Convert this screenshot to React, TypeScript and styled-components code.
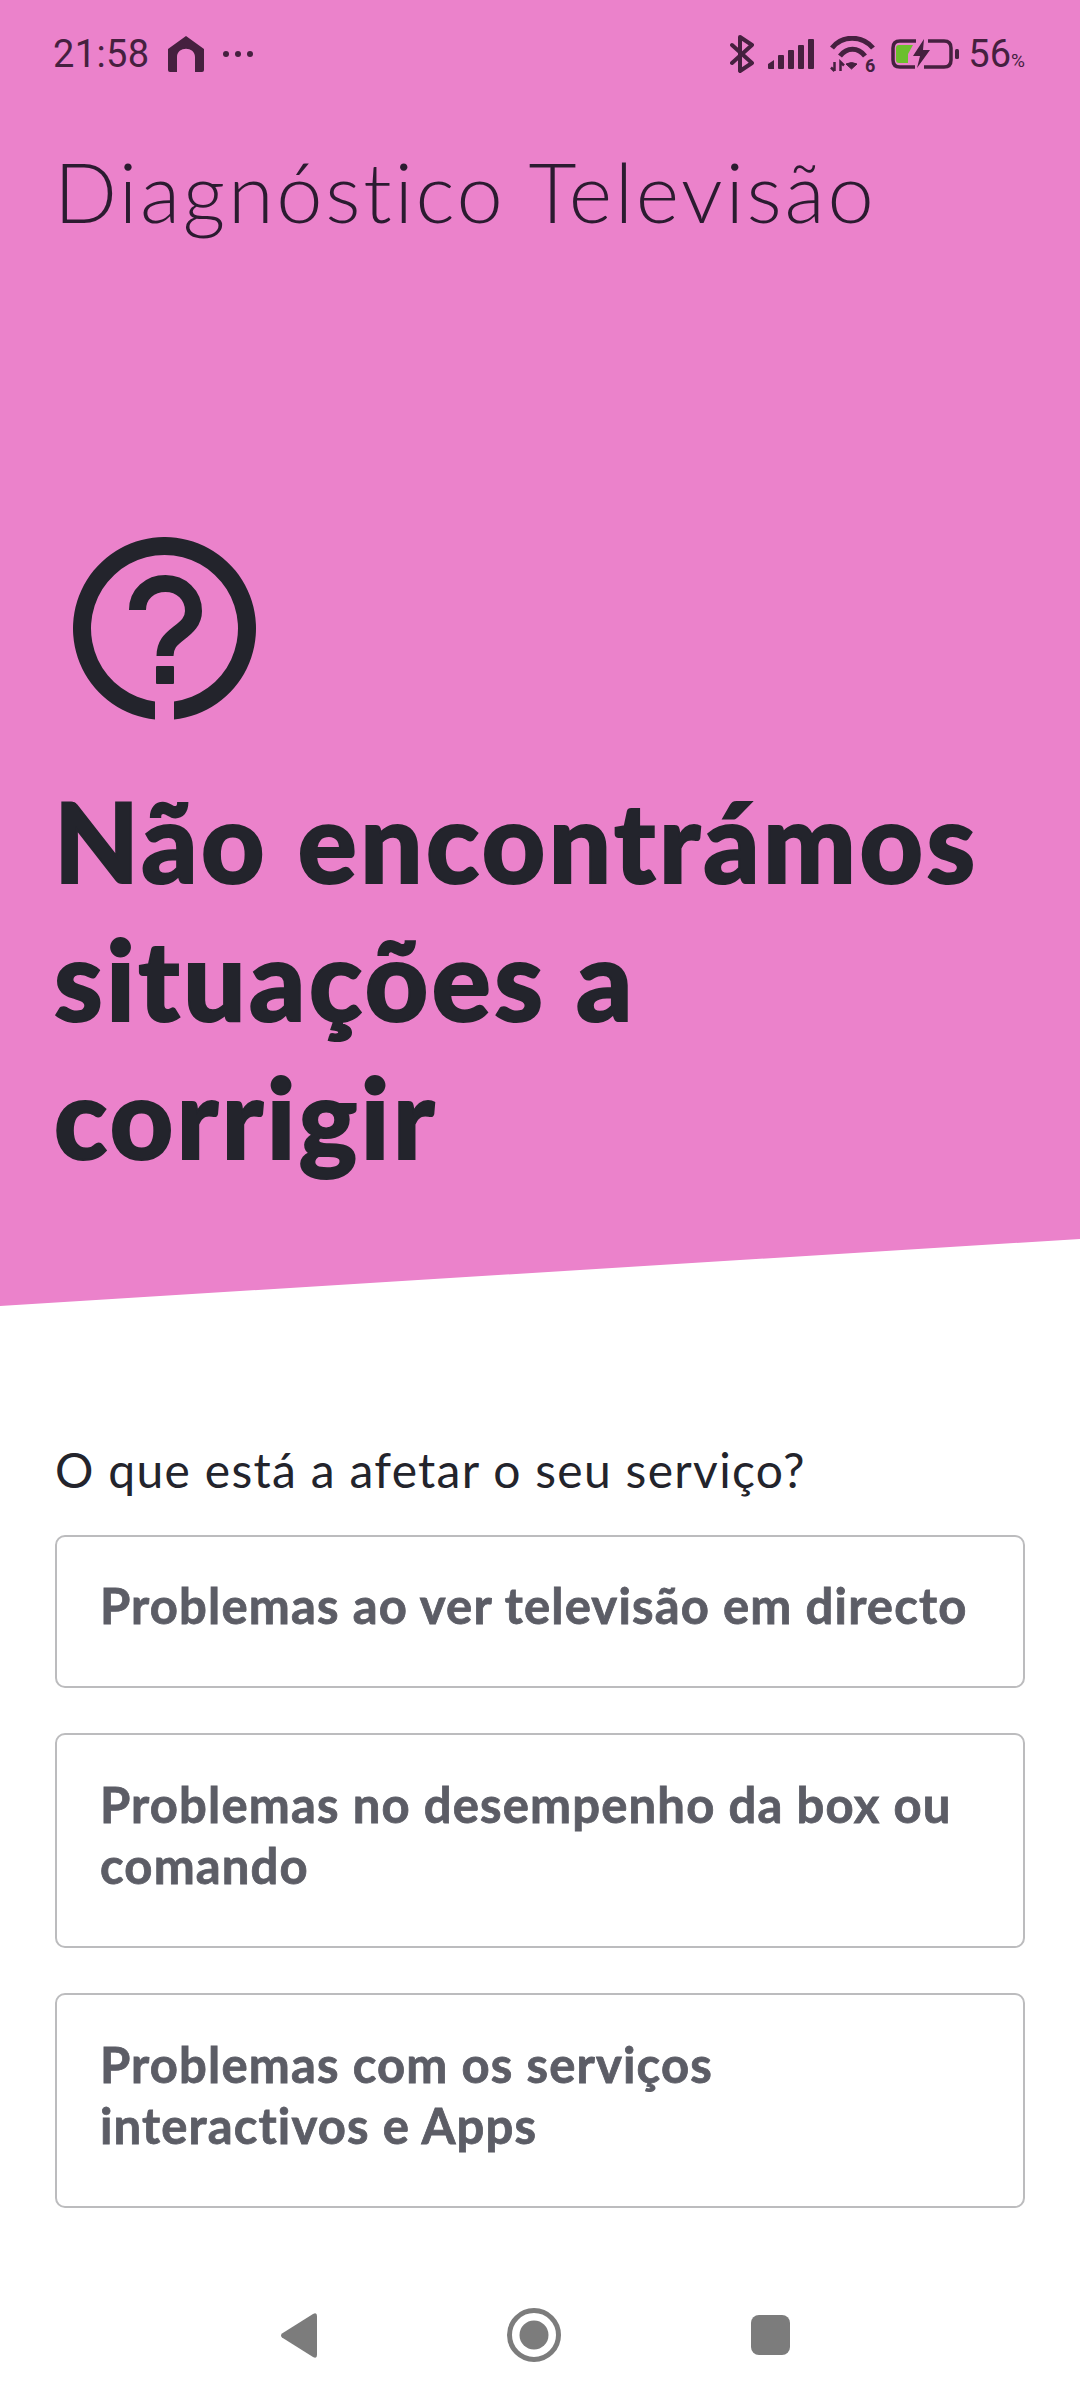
import React from 'react'
import styled, { createGlobalStyle } from 'styled-components'

const GlobalStyle = createGlobalStyle`
  html, body {
    margin: 0;
    padding: 0;
    background: #fff;
  }
  * {
    box-sizing: border-box;
  }
`

const Page = styled.div`
  width: 1080px;
  height: 2400px;
  display: flex;
  flex-direction: column;
  background: #fff;
  font-family: Lato, "Noto Sans", sans-serif;
  overflow: hidden;
`

const Hero = styled.section`
  height: 1306px;
  flex-shrink: 0;
  background: #eb82cb;
  clip-path: polygon(0 0, 100% 0, 100% 1239px, 0 100%);
  padding: 0 55px;
`

const StatusBar = styled.div`
  height: 108px;
  display: flex;
  align-items: center;
  justify-content: space-between;
  color: #45203f;
  font-family: Roboto, sans-serif;
`

const StatusSide = styled.div`
  display: flex;
  align-items: center;
`

const Time = styled.span`
  font-size: 38px;
  letter-spacing: 0.4px;
  margin: 0 18px 0 -2px;
`

const StatusIcon = styled.svg<{ $gap?: number }>`
  display: block;
  flex-shrink: 0;
  margin-right: ${({ $gap }) => $gap ?? 0}px;
`

const WifiIcon = styled.div`
  position: relative;
  width: 46px;
  height: 37px;
  margin-right: 16px;
  flex-shrink: 0;
`

const WifiBadge = styled.span`
  position: absolute;
  right: 0;
  bottom: 0;
  font-size: 18px;
  line-height: 14px;
  font-weight: 700;
`

const Percent = styled.span`
  font-size: 38px;
  small {
    font-size: 19px;
  }
`

const Title = styled.h1`
  margin: 33px 0 0 -1px;
  font-size: 83px;
  line-height: 100px;
  letter-spacing: 2.7px;
  font-weight: 300;
  color: #2b1b30;
  white-space: nowrap;
`

const HelpIcon = styled.svg`
  display: block;
  width: 184px;
  height: 184px;
  margin: 296px 0 0 18px;
`

const Heading = styled.h2`
  margin: 50px 0 0 -1px;
  font-size: 110px;
  line-height: 138px;
  letter-spacing: 3.5px;
  font-weight: 900;
  color: #23242c;
  -webkit-text-stroke: 2px #23242c;
  white-space: nowrap;
`

const Content = styled.section`
  flex: 1;
  padding: 0 55px;
  display: flex;
  flex-direction: column;
`

const Question = styled.p`
  margin: 134px 0 0;
  height: 60px;
  font-size: 48px;
  line-height: 60px;
  letter-spacing: 1.3px;
  color: #23242c;
  white-space: nowrap;
`

const Options = styled.div`
  margin-top: 35px;
  display: flex;
  flex-direction: column;
  gap: 45px;
`

const Option = styled.div<{ $tall?: boolean }>`
  height: ${({ $tall }) => ($tall ? '215px' : '153px')};
  border: 2px solid #bcbcbe;
  border-radius: 10px;
  padding: ${({ $tall }) => ($tall ? '39px' : '38px')} 43px 0;
  font-size: 49px;
  line-height: 61px;
  letter-spacing: 1.15px;
  font-weight: 700;
  color: #5c5d66;
  -webkit-text-stroke: 0.8px #5c5d66;
  white-space: nowrap;
`

const NavBar = styled.nav`
  height: 130px;
  flex-shrink: 0;
  display: flex;
  align-items: center;
  gap: 190px;
  padding-left: 281px;
`

const Bluetooth = () => (
  <StatusIcon $gap={14} width="24" height="38" viewBox="0 0 24 38" fill="none" stroke="#45203f" strokeWidth="4" strokeLinecap="round" strokeLinejoin="round">
    <path d="M2 10 L22 28 L10 36 V2 L22 10 L2 28" />
  </StatusIcon>
)

const Signal = () => (
  <StatusIcon $gap={13} width="48" height="31" viewBox="0 0 48 31" fill="#45203f">
    <path d="M0 25 L6 21 V30 H1 Q0 30 0 29 Z" />
    <rect x="10" y="16" width="6" height="14" rx="1" />
    <rect x="20" y="11" width="6" height="19" rx="1" />
    <rect x="30" y="6" width="6" height="24" rx="1" />
    <rect x="40" y="0" width="6" height="30" rx="1" />
  </StatusIcon>
)

const Wifi = () => (
  <WifiIcon>
    <StatusIcon width="46" height="37" viewBox="0 0 46 37" fill="none" stroke="#45203f">
      <path d="M3 12 C13 -1 33 -1 44 12" strokeWidth="5" />
      <path d="M11 20 C18 11 29 11 36 20" strokeWidth="5" />
      <path d="M17 28 Q22.5 25 28 28 L22.5 33 Z" fill="#45203f" strokeWidth="1" />
      <path d="M5.5 26 V35 M2 31.5 L5.5 35 M11.5 35 V26 L15 29.5" strokeWidth="2.5" />
    </StatusIcon>
    <WifiBadge>6</WifiBadge>
  </WifiIcon>
)

const Battery = () => (
  <StatusIcon $gap={9} width="68" height="31" viewBox="0 0 68 31" fill="none">
    <path d="M25 2 H9 Q2 2 2 9 V21 Q2 28 9 28 H24" stroke="#45203f" strokeWidth="3.5" />
    <path d="M37 2 H53 Q60 2 60 9 V21 Q60 28 53 28 H33" stroke="#45203f" strokeWidth="3.5" />
    <path d="M5 9 Q5 6 8 6 H22 L17 15 V24 H8 Q5 24 5 21 Z" fill="#6cbf2c" />
    <path d="M33 0 L22 17 H29 L26 29 L39 11 H32 Z" fill="#45203f" />
    <rect x="64" y="10" width="4" height="10" rx="1.5" fill="#45203f" />
  </StatusIcon>
)

const App = () => {
  return (
    <Page>
      <GlobalStyle />
      <Hero>
        <StatusBar>
          <StatusSide>
            <Time>21:58</Time>
            <StatusIcon $gap={18} width="36" height="36" viewBox="0 0 36 36" fill="#45203f">
              <path d="M18 0 L36 13 V34 Q36 36 34 36 H27 V21 C27 10 9 10 9 21 V36 H2 Q0 36 0 34 V13 Z" />
            </StatusIcon>
            <StatusIcon width="32" height="8" viewBox="0 0 32 8" fill="#45203f">
              <circle cx="4" cy="4" r="3" />
              <circle cx="16" cy="4" r="3" />
              <circle cx="28" cy="4" r="3" />
            </StatusIcon>
          </StatusSide>
          <StatusSide>
            <Bluetooth />
            <Signal />
            <Wifi />
            <Battery />
            <Percent>56<small>%</small></Percent>
          </StatusSide>
        </StatusBar>
        <Title>Diagnóstico Televisão</Title>
        <HelpIcon viewBox="0 0 184 184" fill="none">
          <path d="M82 182.5 A91.5 91.5 0 1 1 101 182.5 L101 164.4 A73.5 73.5 0 1 0 82 164.4 Z" fill="#23242c" />
          <path d="M64.5 73 C64.5 57 77 46.5 92.5 46.5 C108 46.5 120.5 58 120.5 74 C120.5 84 114 90 106 96 C97 103 92 108 92 119" stroke="#23242c" strokeWidth="17" />
          <rect x="83" y="129" width="18" height="18" rx="1" fill="#23242c" />
        </HelpIcon>
        <Heading>Não encontrámos<br />situações a<br />corrigir</Heading>
      </Hero>
      <Content>
        <Question>O que está a afetar o seu serviço?</Question>
        <Options>
          <Option>Problemas ao ver televisão em directo</Option>
          <Option $tall>Problemas no desempenho da box ou<br />comando</Option>
          <Option $tall>Problemas com os serviços<br />interactivos e Apps</Option>
        </Options>
      </Content>
      <NavBar>
        <svg width="36" height="45" viewBox="0 0 36 45" fill="#7c7c7c">
          <path d="M32 1 Q36 -1 36 3 V42 Q36 46 32 44 L1 24.5 Q-1 22.5 1 20.5 Z" />
        </svg>
        <svg width="54" height="54" viewBox="0 0 54 54" fill="none">
          <circle cx="27" cy="27" r="24.5" stroke="#7c7c7c" strokeWidth="5" />
          <circle cx="27" cy="27" r="14.5" fill="#7c7c7c" />
        </svg>
        <svg width="39" height="40" viewBox="0 0 39 40" fill="#7c7c7c">
          <rect width="39" height="40" rx="8" />
        </svg>
      </NavBar>
    </Page>
  )
}

export default App
